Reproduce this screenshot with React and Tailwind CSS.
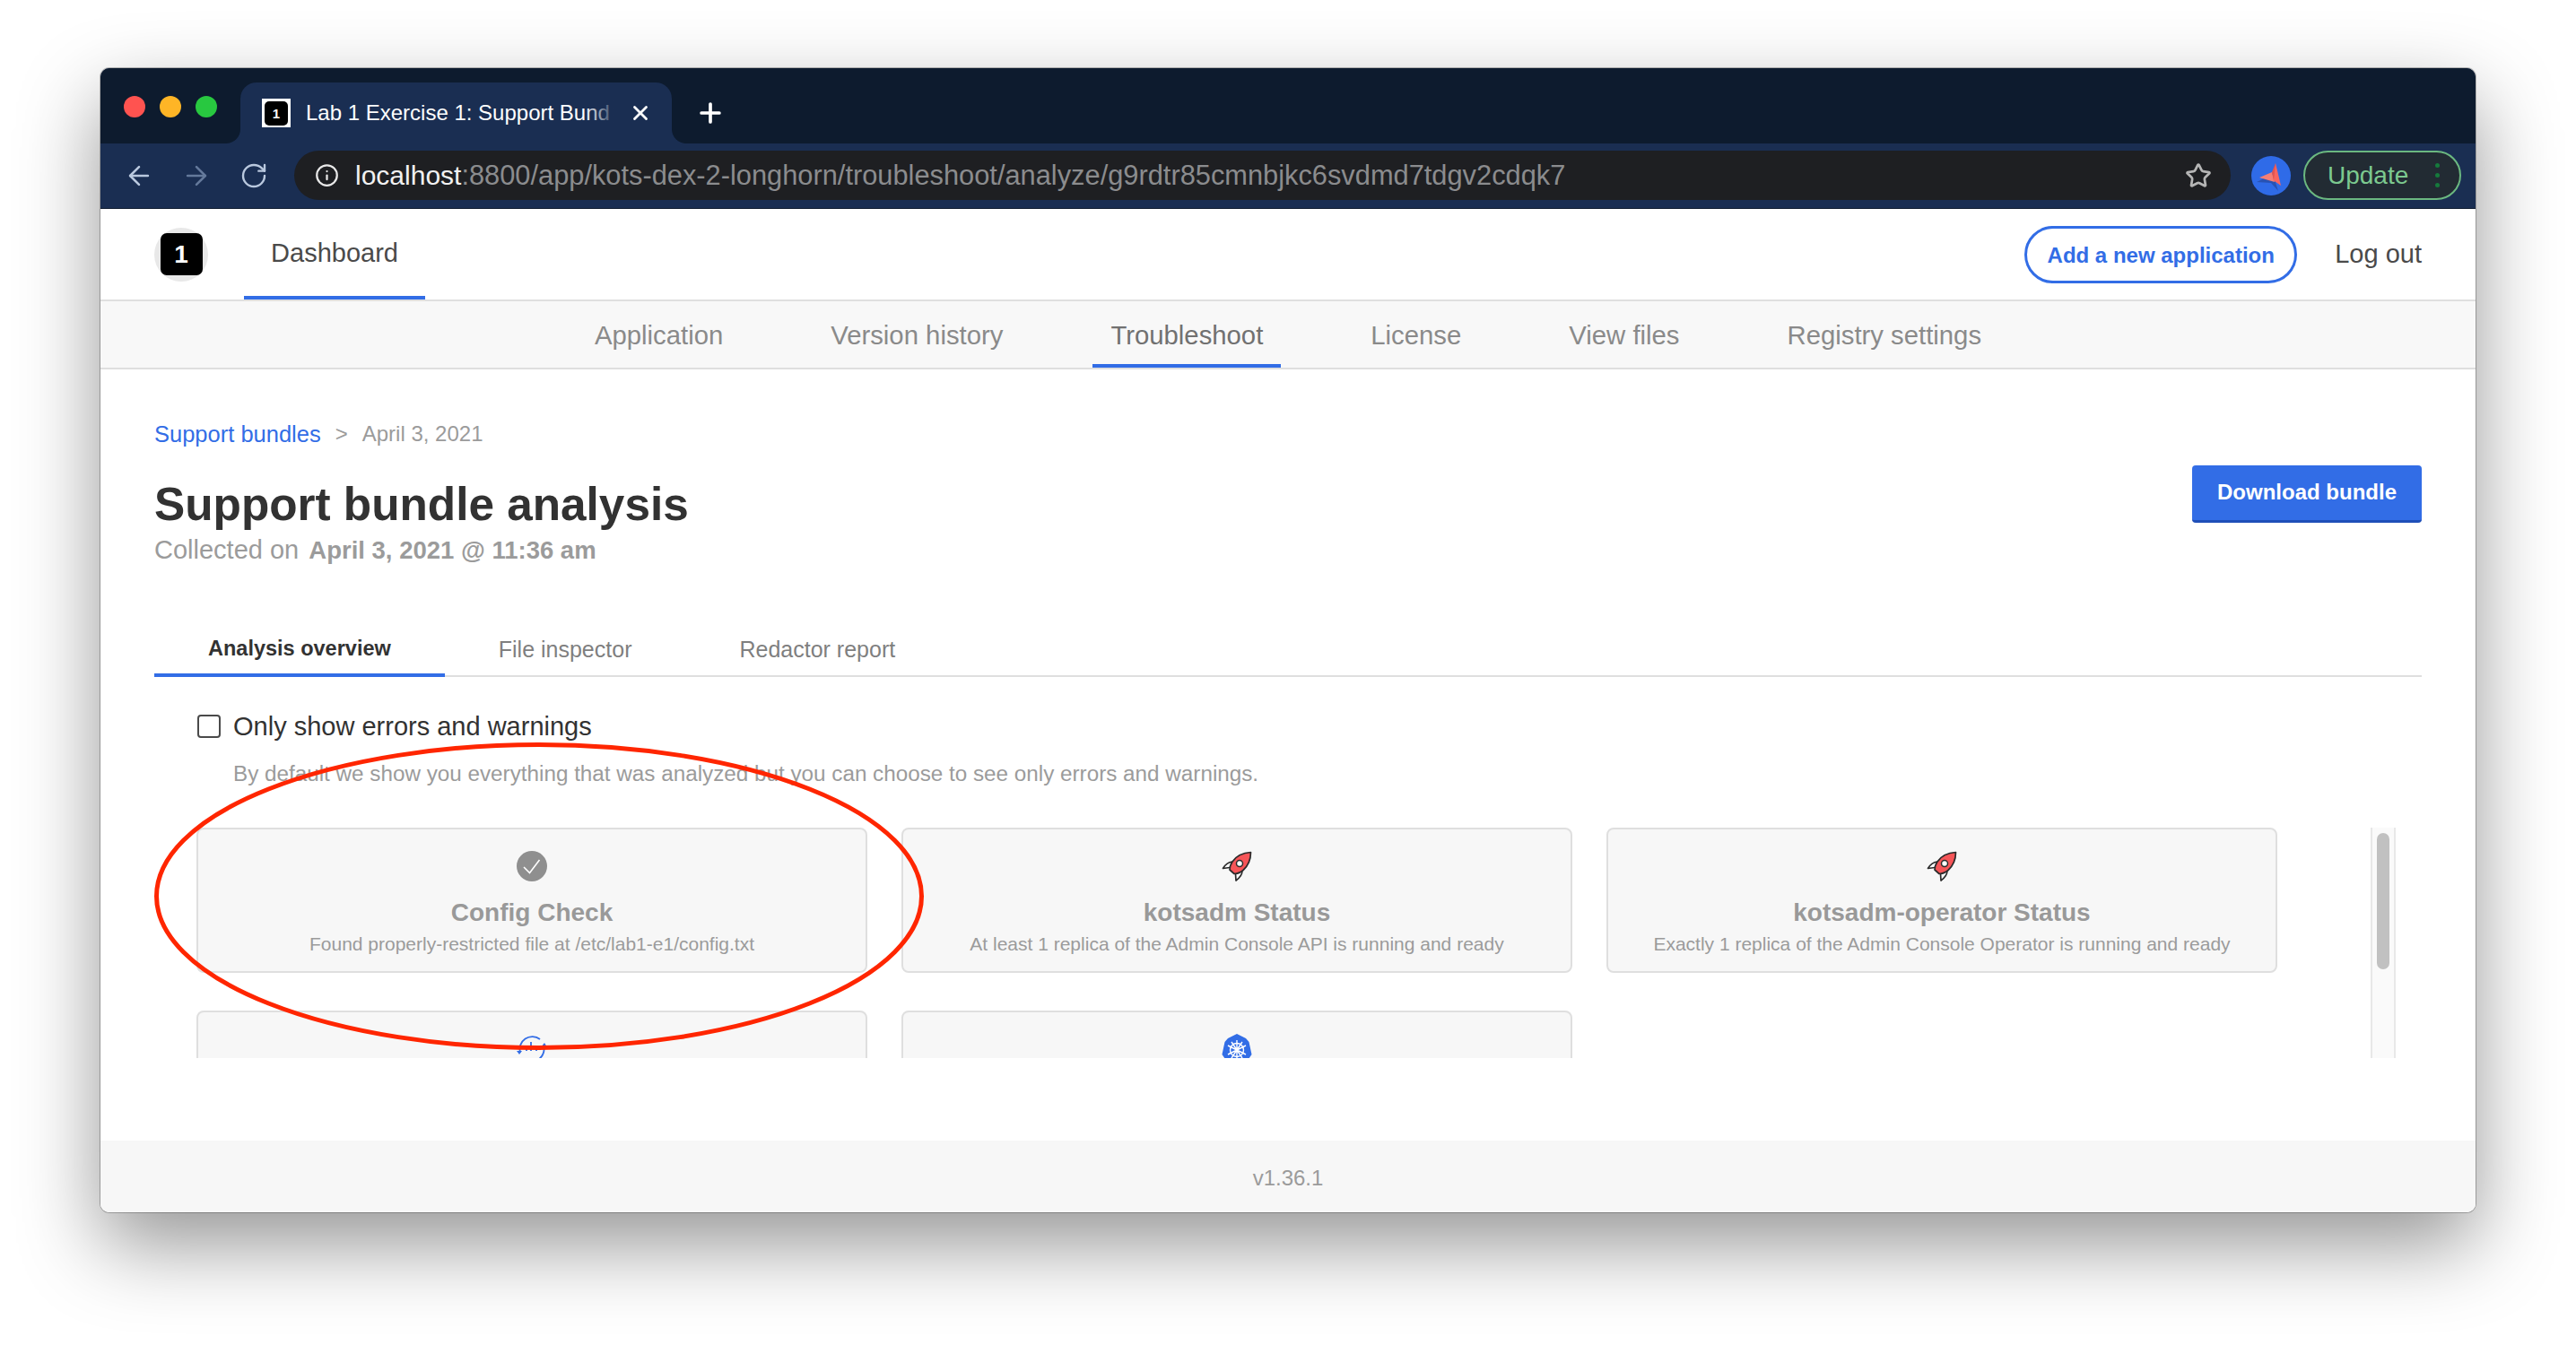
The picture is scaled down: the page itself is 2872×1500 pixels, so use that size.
import React from 'react';
import { ArrowLeft, ArrowRight, RotateCw, Info, Star, X, Plus } from 'lucide-react';

const subTabs = [
  { label: 'Application' },
  { label: 'Version history' },
  { label: 'Troubleshoot', active: true },
  { label: 'License' },
  { label: 'View files' },
  { label: 'Registry settings' },
];

function CheckIcon() {
  return (
    <svg width="34" height="34" viewBox="0 0 34 34">
      <circle cx="17" cy="17" r="17" fill="#8f8f8f" />
      <path d="M8 18l6.5 6.5L25.5 10" fill="none" stroke="#fff" strokeWidth="1.6" />
    </svg>
  );
}

function RocketIcon() {
  return (
    <svg width="34" height="34" viewBox="0 0 34 34" strokeLinejoin="round">
      <path d="M12 12C8 12.500 4 15 1.500 19.500L9 18.500Z" fill="#fff" stroke="#2b2b2b" strokeWidth="1.700" />
      <path d="M23 22C23 26 20 30 16 33L15.500 25.500Z" fill="#fff" stroke="#2b2b2b" strokeWidth="1.700" />
      <path d="M32.500 1.500C24 2 16 6 12 12C10 15 9 18 9 21L14 25.500C17 25.500 21 24 24 21.500C30 16 32.500 9 32.500 1.500Z" fill="#f65558" stroke="#2b2b2b" strokeWidth="1.700" />
      <circle cx="20" cy="14" r="3.500" fill="#fff" stroke="#2b2b2b" strokeWidth="1.500" />
    </svg>
  );
}

function SyncIcon() {
  return (
    <svg width="34" height="34" viewBox="0 0 34 34" fill="none" stroke="#326de6" strokeWidth="1.800">
      <path d="M4 21A14 14 0 0 1 26 6" />
      <path d="M30 13A14 14 0 0 1 8 28" />
      <path d="M16 9v10M11 14v5M22 14v5" />
      <path d="M27 15l4-5 3 5z" fill="#326de6" stroke="none" />
      <path d="M0 19l3 4 3-4z" fill="#326de6" stroke="none" />
    </svg>
  );
}

function KubeIcon() {
  return (
    <svg width="34" height="36" viewBox="0 0 34 36">
      <path d="M17 0l10 5 3.500 4 3 14L26 34H8L.5 23l3-14L7 5z" fill="#326de6" />
      <g fill="none" stroke="#fff" strokeWidth="1.400">
        <circle cx="17" cy="18" r="7.500" />
        <path d="M17 7v22M7 13l20 10M27 13L7 23M11 27l12-18M23 27L11 9" />
      </g>
    </svg>
  );
}

function AvatarIcon() {
  return (
    <svg width="44" height="44" viewBox="0 0 44 44">
      <circle cx="22" cy="22" r="22" fill="#2f6be8" />
      <path d="M6 29l16 1 8 9-6-19z" fill="#24418f" opacity="0.6" />
      <path d="M27 8l6 25-10-7z" fill="#f9655f" />
      <path d="M9 24l14-6 3 11z" fill="#f47f76" />
      <path d="M23 18l4-10-2 20z" fill="#e2544f" />
    </svg>
  );
}

function AnalyzerCard({ icon, title, text }) {
  return (
    <div className="flex h-[162px] w-[748px] flex-col items-center rounded-lg border-2 border-[#dfdfdf] bg-[#f7f7f7] pt-[24px]">
      <div className="h-[34px]">{icon}</div>
      {title && <div className="mt-[17px] text-[28px] leading-[36px] font-bold text-[#999999]">{title}</div>}
      {text && <div className="mt-[3px] text-[21px] leading-[28px] text-[#9b9b9b]">{text}</div>}
    </div>
  );
}

export default function App() {
  return (
    <div className="flex min-h-screen justify-center bg-white pt-[76px] font-['Liberation_Sans',Arial,sans-serif]">
      <div className="relative flex h-[1276px] w-[2648px] flex-col overflow-hidden rounded-[10px] shadow-[0_0_0_1px_rgba(0,0,0,0.25),0_36px_90px_rgba(0,0,0,0.42)]">
        {/* title bar */}
        <div className="flex h-[84px] shrink-0 bg-[#1a2e52]">
          <div className="flex w-[156px] items-start gap-[16px] rounded-br-[16px] bg-[#0d1b2e] pt-[31px] pl-[26px]">
            <span className="h-[24px] w-[24px] rounded-full bg-[#ff5350]" />
            <span className="h-[24px] w-[24px] rounded-full bg-[#feb526]" />
            <span className="h-[24px] w-[24px] rounded-full bg-[#28c840]" />
          </div>
          <div className="flex w-[481px] items-end bg-[#0d1b2e]">
            <div className="flex h-[68px] w-full items-center rounded-t-[18px] bg-[#1a2e52] pl-[24px]">
              <div className="flex h-[32px] w-[32px] items-center justify-center bg-white">
                <div className="flex h-[27px] w-[26px] items-center justify-center rounded-[5px] bg-black text-[15px] leading-none font-bold text-white">1</div>
              </div>
              <div className="relative ml-[17px] w-[347px] text-[24px] leading-[32px] whitespace-nowrap text-white">
                Lab 1 Exercise 1: Support Bund
                <span className="absolute top-0 right-0 h-full w-[36px] bg-gradient-to-r from-transparent to-[#1a2e52]" />
              </div>
              <X size={26} strokeWidth={2.6} className="ml-[13px] text-white" />
            </div>
          </div>
          <div className="flex flex-1 items-center rounded-bl-[16px] bg-[#0d1b2e] pl-[26px]">
            <Plus size={34} strokeWidth={2.6} className="mt-[16px] text-white" />
          </div>
        </div>

        {/* toolbar */}
        <div className="flex h-[73px] shrink-0 items-start border-b border-[#101c30] bg-[#1a2e52] pt-[8px]">
          <div className="flex h-[55px] w-[216px] items-center pl-[26px]">
            <ArrowLeft size={34} strokeWidth={1.800} className="text-[#b9c8de]" />
            <ArrowRight size={34} strokeWidth={1.800} className="ml-[30px] text-[#64799b]" />
            <RotateCw size={32} strokeWidth={1.800} className="ml-[31px] text-[#b9c8de]" />
          </div>
          <div className="flex h-[55px] w-[2159px] items-center rounded-full bg-[#1e1f22] pl-[23px]">
            <Info size={27} strokeWidth={2} className="text-[#e8e8e8]" />
            <span className="mt-[2px] ml-[18px] text-[30px] leading-none whitespace-nowrap text-[#f1f1f1]">
              localhost<span className="text-[30.8px] text-[#8b8c8e]">:8800/app/kots-dex-2-longhorn/troubleshoot/analyze/g9rdtr85cmnbjkc6svdmd7tdgv2cdqk7</span>
            </span>
            <Star size={30} strokeWidth={2.200} className="mr-[21px] ml-auto text-[#b5b5b5]" />
          </div>
          <div className="ml-[23px] mt-[6px]">
            <AvatarIcon />
          </div>
          <div className="ml-[14px] flex h-[55px] w-[176px] items-center rounded-full border-[2px] border-[#6bb880] bg-[#222b33] pl-[25px]">
            <span className="text-[28px] leading-none text-[#7cc98f]">Update</span>
            <span className="ml-[30px] flex flex-col gap-[6px]">
              <span className="h-[5px] w-[5px] rounded-full bg-[#157a3c]" />
              <span className="h-[5px] w-[5px] rounded-full bg-[#157a3c]" />
              <span className="h-[5px] w-[5px] rounded-full bg-[#157a3c]" />
            </span>
          </div>
        </div>

        {/* page */}
        <div className="flex flex-1 flex-col bg-white">
          <div className="flex h-[103px] shrink-0 items-center border-b-2 border-[#dfdfdf] px-[60px]">
            <div className="flex h-[60px] w-[60px] items-center justify-center rounded-full bg-[#e8e8e8]">
              <div className="flex h-[47px] w-[47px] items-center justify-center rounded-[7px] bg-black text-[28px] leading-none font-bold text-white">1</div>
            </div>
            <div className="ml-[40px] flex h-[101px] w-[202px] items-center justify-center border-b-4 border-[#326de6] pt-[2px] text-[29px] text-[#4a4a4a]">Dashboard</div>
            <div className="ml-auto flex h-[64px] w-[304px] items-center justify-center rounded-full border-[3px] border-[#326de6] pt-[2px] text-[24px] font-bold text-[#326de6]">Add a new application</div>
            <div className="ml-[42px] text-[29px] text-[#4a4a4a]">Log out</div>
          </div>

          <div className="flex h-[76px] shrink-0 justify-center border-b-2 border-[#dfdfdf] bg-[#f8f8f8]">
            {subTabs.map((tab) => (
              <div
                key={tab.label}
                className={`mx-[40px] flex items-center border-b-4 px-[20px] pt-[6px] text-[29.300px] ${
                  tab.active ? 'border-[#326de6] text-[#717171]' : 'border-transparent text-[#8a8a8a]'
                }`}
              >
                {tab.label}
              </div>
            ))}
          </div>

          <div className="flex-1 px-[60px]">
            <div className="mt-[57px] flex items-center leading-[30px] text-[#9b9b9b]">
              <span className="text-[25.500px] text-[#326de6]">Support bundles</span>
              <span className="ml-[16px] text-[24px]">&gt;</span>
              <span className="ml-[16px] text-[24px]">April 3, 2021</span>
            </div>
            <div className="flex items-start justify-between">
              <div>
                <h1 className="mt-[33px] text-[51.300px] leading-[62px] font-bold text-[#323232]">Support bundle analysis</h1>
                <p className="text-[29px] leading-[38px] text-[#9b9b9b]">
                  Collected on <span className="ml-[3px] text-[27.500px] font-bold">April 3, 2021 @ 11:36 am</span>
                </p>
              </div>
              <div className="mt-[20px] flex h-[64px] w-[256px] items-center justify-center rounded-[4px] border-b-[3px] border-[#1f4fb8] bg-[#326de6] pb-[2px] text-[24px] font-bold text-white">Download bundle</div>
            </div>

            <div className="mt-[64px] flex h-[58px] border-b-2 border-[#dfdfdf] text-[25px]">
              <div className="-mb-[2px] flex items-center border-b-4 border-[#326de6] px-[60px] text-[23.500px] font-bold text-[#323232]">Analysis overview</div>
              <div className="flex items-center px-[60px] text-[#7f7f7f]">File inspector</div>
              <div className="flex items-center px-[60px] text-[#7f7f7f]">Redactor report</div>
            </div>

            <div className="mt-[37px] ml-[48px] flex items-center">
              <span className="h-[26px] w-[26px] rounded-[4px] border-2 border-[#4a4a4a] bg-white" />
              <span className="ml-[14px] text-[29px] leading-[36px] text-[#323232]">Only show errors and warnings</span>
            </div>
            <p className="mt-[19px] ml-[88px] text-[24.250px] leading-[32px] text-[#9b9b9b]">
              By default we show you everything that was analyzed but you can choose to see only errors and warnings.
            </p>

            <div className="mt-[44px] ml-[47px] flex h-[257px] overflow-hidden">
              <div className="flex w-[2320px] flex-wrap content-start gap-x-[38px] gap-y-[42px]">
                <AnalyzerCard icon={<CheckIcon />} title="Config Check" text="Found properly-restricted file at /etc/lab1-e1/config.txt" />
                <AnalyzerCard icon={<RocketIcon />} title="kotsadm Status" text="At least 1 replica of the Admin Console API is running and ready" />
                <AnalyzerCard icon={<RocketIcon />} title="kotsadm-operator Status" text="Exactly 1 replica of the Admin Console Operator is running and ready" />
                <AnalyzerCard icon={<SyncIcon />} />
                <AnalyzerCard icon={<KubeIcon />} />
              </div>
              <div className="ml-[104px] w-[28px] border-x-2 border-[#e8e8e8] bg-[#fafafa] px-[5px] pt-[6px]">
                <div className="h-[152px] rounded-full bg-[#c1c1c1]" />
              </div>
            </div>
          </div>

          <div className="flex h-[80px] shrink-0 items-center justify-center bg-[#f7f7f7] pt-[4px] text-[24px] text-[#9b9b9b]">v1.36.1</div>
        </div>

        {/* hand drawn annotation over the first card */}
        <svg className="pointer-events-none absolute top-[752px] left-[60px]" width="858" height="343" viewBox="0 0 858 343" fill="none">
          <ellipse cx="429" cy="171.500" rx="426.500" ry="169" stroke="#ff2600" strokeWidth="5" />
        </svg>
      </div>
    </div>
  );
}
